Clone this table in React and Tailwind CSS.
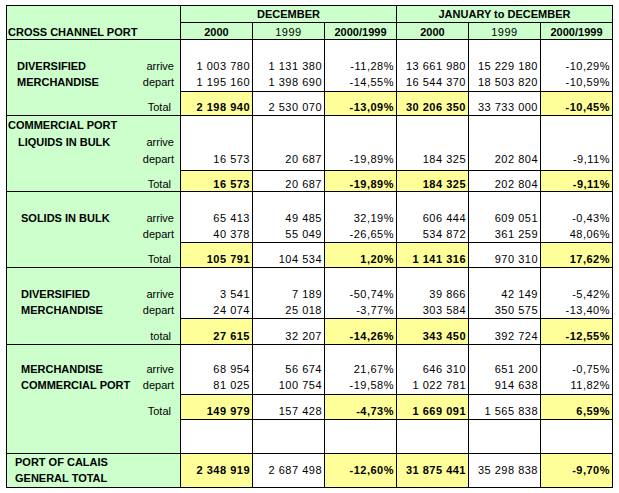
import React from "react";

const blocks = [
  {
    top: "h-[52px] pt-[18px]",
    lh: "h-[16px] leading-[16px]",
    tot: "h-[24px] pt-[7px]",
    labTot: "h-[23px] pt-[7px]",
    totalLabel: "Total",
    lines: [
      { name: "DIVERSIFIED", pl: "pl-[10px]", sub: "arrive", v: ["1 003 780", "1 131 380", "-11,28%", "13 661 980", "15 229 180", "-10,29%"] },
      { name: "MERCHANDISE", pl: "pl-[10px]", sub: "depart", v: ["1 195 160", "1 398 690", "-14,55%", "16 544 370", "18 503 820", "-10,59%"] },
    ],
    total: ["2 198 940", "2 530 070", "-13,09%", "30 206 350", "33 733 000", "-10,45%"],
  },
  {
    top: "h-[55px] pt-[1px]",
    lh: "h-[17px] leading-[17px]",
    tot: "h-[21px] pt-[5px]",
    labTot: "h-[20px] pt-[5px]",
    totalLabel: "Total",
    lines: [
      { name: "COMMERCIAL PORT", pl: "pl-[1px]", sub: "", v: ["", "", "", "", "", ""] },
      { name: "LIQUIDS IN BULK", pl: "pl-[11px]", sub: "arrive", v: ["", "", "", "", "", ""] },
      { name: "", pl: "", sub: "depart", v: ["16 573", "20 687", "-19,89%", "184 325", "202 804", "-9,11%"] },
    ],
    total: ["16 573", "20 687", "-19,89%", "184 325", "202 804", "-9,11%"],
  },
  {
    top: "h-[51px] pt-[18px]",
    lh: "h-[16px] leading-[16px]",
    tot: "h-[25px] pt-[8px]",
    labTot: "h-[24px] pt-[8px]",
    totalLabel: "Total",
    lines: [
      { name: "SOLIDS IN BULK", pl: "pl-[14px]", sub: "arrive", v: ["65 413", "49 485", "32,19%", "606 444", "609 051", "-0,43%"] },
      { name: "", pl: "", sub: "depart", v: ["40 378", "55 049", "-26,65%", "534 872", "361 259", "48,06%"] },
    ],
    total: ["105 791", "104 534", "1,20%", "1 141 316", "970 310", "17,62%"],
  },
  {
    top: "h-[51px] pt-[18px]",
    lh: "h-[16px] leading-[16px]",
    tot: "h-[26px] pt-[9px]",
    labTot: "h-[25px] pt-[9px]",
    totalLabel: "total",
    lines: [
      { name: "DIVERSIFIED", pl: "pl-[14px]", sub: "arrive", v: ["3 541", "7 189", "-50,74%", "39 866", "42 149", "-5,42%"] },
      { name: "MERCHANDISE", pl: "pl-[14px]", sub: "depart", v: ["24 074", "25 018", "-3,77%", "303 584", "350 575", "-13,40%"] },
    ],
    total: ["27 615", "32 207", "-14,26%", "343 450", "392 724", "-12,55%"],
  },
  {
    top: "h-[50px] pt-[16px]",
    lh: "h-[16px] leading-[16px]",
    tot: "h-[25px] pt-[8px]",
    labTot: "h-[25px] pt-[8px]",
    totalLabel: "Total",
    extra: true,
    lines: [
      { name: "MERCHANDISE", pl: "pl-[14px]", sub: "arrive", v: ["68 954", "56 674", "21,67%", "646 310", "651 200", "-0,75%"] },
      { name: "COMMERCIAL PORT", pl: "pl-[14px]", sub: "depart", v: ["81 025", "100 754", "-19,58%", "1 022 781", "914 638", "11,82%"] },
    ],
    total: ["149 979", "157 428", "-4,73%", "1 669 091", "1 565 838", "6,59%"],
  },
];

const grand = ["2 348 919", "2 687 498", "-12,60%", "31 875 441", "35 298 838", "-9,70%"];

// columns 0, 2, 3, 5 are the highlighted ones
const hot = (i) => i === 0 || i === 2 || i === 3 || i === 5;

function Block({ b }) {
  return (
    <div className="flex">
      <div className="w-[174px] border-r border-b border-black bg-[#ccffcc] flex flex-col">
        <div className={b.top}>
          {b.lines.map((l, i) => (
            <div key={i} className={`${b.lh} flex justify-between`}>
              <span className={`${l.pl} font-bold`}>{l.name}</span>
              <span className="pr-[6px]">{l.sub}</span>
            </div>
          ))}
        </div>
        <div className={`${b.labTot} leading-[16px] text-right pr-[9px]`}>{b.totalLabel}</div>
        {b.extra && <div className="h-[33px]" />}
      </div>
      <div className="flex flex-col">
        <div className="flex">
          {[0, 1, 2, 3, 4, 5].map((c) => (
            <div key={c} className={`${b.top} w-[72px] border-r border-b border-black bg-white`}>
              {b.lines.map((l, i) => (
                <div key={i} className={`${b.lh} text-right pr-[2px] tracking-[0.5px]`}>
                  {l.v[c] || "\u00a0"}
                </div>
              ))}
            </div>
          ))}
        </div>
        <div className="flex">
          {b.total.map((v, c) => (
            <div
              key={c}
              className={`${b.tot} w-[72px] border-r border-b border-black text-right pr-[2px] tracking-[0.5px] leading-[16px] ${
                hot(c) ? "bg-[#ffff99] font-bold" : "bg-white"
              }`}
            >
              {v}
            </div>
          ))}
        </div>
        {b.extra && (
          <div className="flex">
            {[0, 1, 2, 3, 4, 5].map((c) => (
              <div key={c} className="h-[34px] w-[72px] border-r border-b border-black bg-white" />
            ))}
          </div>
        )}
      </div>
    </div>
  );
}

export default function App() {
  const years = [
    { t: "2000", bold: true },
    { t: "1999", bold: false },
    { t: "2000/1999", bold: true },
  ];
  return (
    <div className="w-[619px] h-[493px] bg-white overflow-hidden pt-[5px] pl-[6px] font-['Liberation_Sans',Arial,sans-serif] text-[11px] text-black">
      <div className="w-[607px] border-t border-l border-black">
        {/* header */}
        <div className="flex">
          <div className="w-[174px] h-[34px] border-r border-b border-black bg-[#ccffcc] pt-[19px] pl-[1px] leading-[14px] font-bold">
            CROSS CHANNEL PORT
          </div>
          <div className="flex flex-col">
            <div className="flex">
              <div className="w-[216px] h-[17px] border-r border-b border-black bg-[#ccffcc] text-center font-bold leading-[16px]">
                DECEMBER
              </div>
              <div className="w-[216px] h-[17px] border-r border-b border-black bg-[#ccffcc] text-center font-bold leading-[16px]">
                JANUARY to DECEMBER
              </div>
            </div>
            <div className="flex">
              {[...years, ...years].map((y, i) => (
                <div
                  key={i}
                  className={`w-[72px] h-[17px] border-r border-b border-black bg-[#ccffcc] text-center pt-[1px] leading-[16px] ${
                    y.bold ? "font-bold" : "tracking-[0.5px]"
                  }`}
                >
                  {y.t}
                </div>
              ))}
            </div>
          </div>
        </div>

        {blocks.map((b, i) => (
          <Block key={i} b={b} />
        ))}

        {/* general total */}
        <div className="flex">
          <div className="w-[174px] h-[34px] border-r border-b border-black bg-[#ccffcc] pl-[8px] font-bold">
            <div className="h-[16px] leading-[16px]">PORT OF CALAIS</div>
            <div className="h-[17px] leading-[17px]">GENERAL TOTAL</div>
          </div>
          {grand.map((v, c) => (
            <div
              key={c}
              className={`w-[72px] h-[34px] border-r border-b border-black flex items-center justify-end pr-[2px] tracking-[0.5px] ${
                hot(c) ? "bg-[#ffff99] font-bold" : "bg-white"
              }`}
            >
              {v}
            </div>
          ))}
        </div>
      </div>
    </div>
  );
}
